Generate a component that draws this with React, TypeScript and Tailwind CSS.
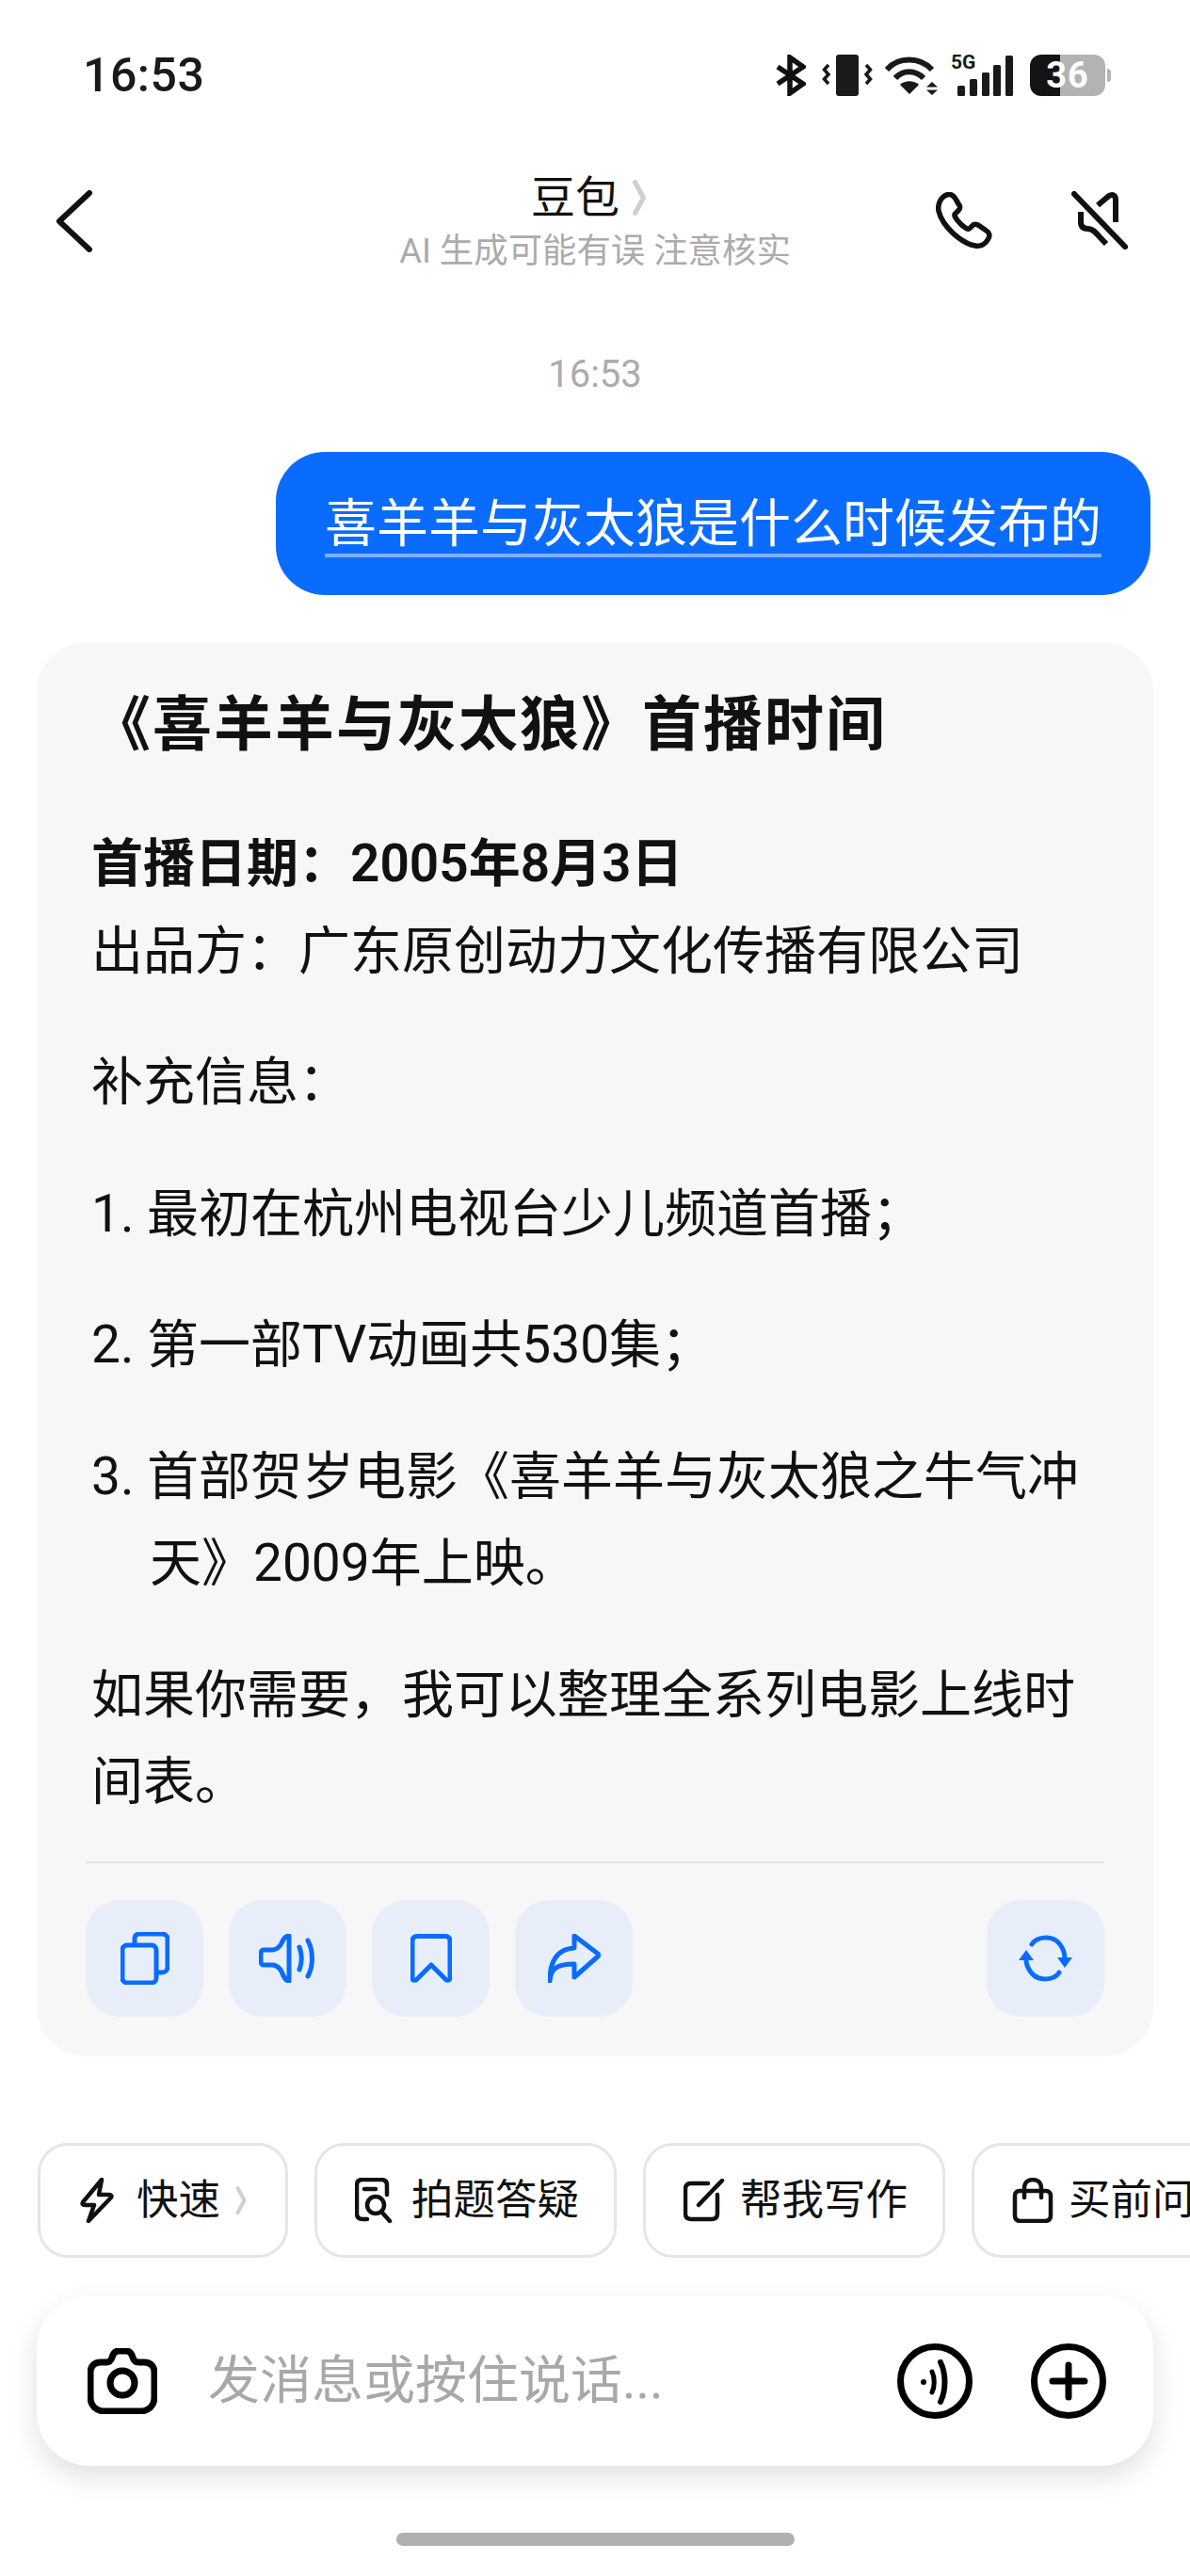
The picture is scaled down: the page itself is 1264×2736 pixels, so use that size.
const fontStack = { fontFamily: '"Roboto", "Noto Sans CJK SC", sans-serif' };

function Bluetooth() {
  return (
    <svg width="32" height="44" viewBox="0 0 32 44" fill="none" stroke="#111" strokeWidth="5.5">
      <path d="M2 13 L29 31 L15 41 V3 L29 13 L2 31" />
    </svg>
  );
}

function Vibrate() {
  return (
    <svg width="54" height="44" viewBox="0 0 54 44" fill="#1a1a1a">
      <rect x="15" y="0" width="24" height="44" rx="3" />
      <path d="M7 11 L2.5 16 L7 21 L2.5 26 L7 31" fill="none" stroke="#1a1a1a" strokeWidth="3.5" />
      <path d="M47 11 L51.5 16 L47 21 L51.5 26 L47 31" fill="none" stroke="#1a1a1a" strokeWidth="3.5" />
    </svg>
  );
}

function Wifi() {
  return (
    <svg width="58" height="42" viewBox="0 0 58 42" fill="none" stroke="#1a1a1a" strokeWidth="6">
      <path d="M2 15 C14 1 37 1 50 15" />
      <path d="M11 24 C19 15 32 15 41 24" />
      <path d="M26 41 L16 31 C21 26 31 26 36 31 Z" fill="#1a1a1a" stroke="none" />
      <path d="M50 28 L56 33.5 H44 Z M50 42 L44 36.5 H56 Z" fill="#1a1a1a" stroke="none" />
    </svg>
  );
}

function Signal() {
  return (
    <div className="relative h-[44px] w-[66px]">
      <span className="absolute left-0 top-[-2px] text-[21px] font-bold leading-[21px] text-[#1a1a1a]">5G</span>
      <svg className="absolute inset-0" width="66" height="44" viewBox="0 0 66 44" fill="#1a1a1a">
        <rect x="7" y="33" width="8" height="11" rx="1.5" />
        <rect x="20" y="26" width="8" height="18" rx="1.5" />
        <rect x="33" y="19" width="8" height="25" rx="1.5" />
        <rect x="45" y="11" width="8" height="33" rx="1.5" />
        <rect x="58" y="1" width="8" height="43" rx="1.5" />
      </svg>
    </div>
  );
}

function Battery() {
  return (
    <div className="flex items-center gap-[2px]">
      <div className="flex h-[44px] w-[80px] items-center justify-center rounded-[12px] bg-[linear-gradient(90deg,#141414_0,#141414_40%,#b3b3b3_40%,#b3b3b3_100%)] text-[38px] font-bold tracking-[1px] text-white">
        36
      </div>
      <div className="h-[14px] w-[4px] rounded-r-full bg-[#b3b3b3]" />
    </div>
  );
}

function Chevron({ className }: { className: string }) {
  return (
    <svg className={className} viewBox="0 0 12 30" fill="none" stroke="#cfcfcf" strokeWidth="4" strokeLinecap="round" strokeLinejoin="round">
      <path d="M2.5 2 L9.5 15 L2.5 28" />
    </svg>
  );
}

function BackIcon() {
  return (
    <svg width="42" height="66" viewBox="0 0 42 66" fill="none" stroke="#111" strokeWidth="6" strokeLinecap="round" strokeLinejoin="round">
      <path d="M37 3 L5 33 L37 63" />
    </svg>
  );
}

function PhoneIcon() {
  return (
    <svg width="60" height="60" viewBox="0 0 60 60" fill="none" stroke="#111" strokeWidth="5.5" strokeLinejoin="round">
      <path d="M13 2.5 C18 2 20 5 22 9 L25.5 15 C26.5 18 24 20 21.5 22 C20 23 19.5 24.5 20.5 26.5 C24 32 28 36 33 39 C35.5 40 36.5 38.5 38 36.5 C40 34 42 33.5 45 35 L53 40.5 C57 43 58 46 55.5 50 C53 55 48 58 42 57 C28 55 7 37 3 20 C1.5 12 6 4 13 2.5 Z" />
    </svg>
  );
}

function MuteIcon() {
  return (
    <svg width="60" height="62" viewBox="0 0 60 62" fill="none" stroke="#111" strokeWidth="6" strokeLinecap="round">
      <path d="M3 3 L57 59" />
      <path d="M28 15 L40 5 C44 2.5 47 5 47 9 V33" strokeLinecap="butt" />
      <path d="M10 22 V33 C10 38 13 40 18 40 C24 40 27 46 37 56" strokeLinecap="butt" />
    </svg>
  );
}

function CopyIcon() {
  return (
    <svg width="52" height="56" viewBox="0 0 52 56" fill="none" stroke="#0a6cff" strokeWidth="5" strokeLinejoin="round">
      <path d="M15 14 V7 C15 4 17 2 20 2 H44 C47 2 50 4 50 7 V37 C50 41 47 43 44 43 H38" />
      <rect x="2" y="14" width="36" height="40" rx="5" />
    </svg>
  );
}

function SpeakerIcon() {
  return (
    <svg width="62" height="52" viewBox="0 0 62 52" fill="none" stroke="#0a6cff" strokeWidth="5" strokeLinecap="round" strokeLinejoin="round">
      <path d="M32 2 V50 C28 50 26 45 24 40 C22 36 20 34 15 33 H5 C3 33 2 31 2 29 V21 C2 19 3 17 5 17 H15 C20 16 22 14 24 10 C26 5 28 2 32 2 Z" />
      <path d="M43 14 C46 22 46 30 43 38" />
      <path d="M52 7 C58 18 58 34 52 45" />
    </svg>
  );
}

function BookmarkIcon() {
  return (
    <svg width="44" height="52" viewBox="0 0 44 52" fill="none" stroke="#0a6cff" strokeWidth="5" strokeLinejoin="round">
      <path d="M7 2.5 H37 C40 2.5 42 4.5 42 7.5 V47 C42 49.5 38 50 37 48 L22 33 L7 48 C5.5 50 2 49.5 2 47 V7.5 C2 4.5 4 2.5 7 2.5 Z" />
    </svg>
  );
}

function ShareIcon() {
  return (
    <svg width="56" height="52" viewBox="0 0 56 52" fill="none" stroke="#0a6cff" strokeWidth="5" strokeLinejoin="round" strokeLinecap="round">
      <path d="M2 50 C3 38 8 32 28 32 V46 L53 24 C54 23 54 22 53 21 L28 2 V15 C10 16 2 28 2 50 Z" />
    </svg>
  );
}

function RefreshIcon() {
  return (
    <svg width="64" height="52" viewBox="0 0 64 52" fill="none" stroke="#0a6cff" strokeWidth="5" strokeLinecap="round">
      <path d="M17 11 C22 3 38 1 46 10 C50 15 52 20 52 26" />
      <path d="M46 41 C41 49 25 51 17 42 C13 37 11 32 11 28" />
      <path d="M44 25 H60 L52 36 Z" fill="#0a6cff" stroke="none" />
      <path d="M3 28 H19 L11 17 Z" fill="#0a6cff" stroke="none" />
    </svg>
  );
}

function BoltIcon() {
  return (
    <svg width="36" height="48" viewBox="0 0 36 48" fill="none" stroke="#111" strokeWidth="4.5" strokeLinejoin="round">
      <path d="M23 2 L3 26 C2 28 3 29 5 29 H15 L9 46 L33 21 C34 19 33 18 31 18 H20 Z" />
    </svg>
  );
}

function ScanIcon() {
  return (
    <svg width="40" height="48" viewBox="0 0 40 48" fill="none" stroke="#111" strokeWidth="4.5" strokeLinecap="round">
      <path d="M13 44 H8 C4 44 2 42 2 38 V8 C2 4 4 2 8 2 H28 C32 2 34 4 34 8 V18" />
      <circle cx="22" cy="29" r="9" />
      <path d="M29 37 L37 46" />
      <path d="M10 12 H22" />
    </svg>
  );
}

function WriteIcon() {
  return (
    <svg width="44" height="46" viewBox="0 0 44 46" fill="none" stroke="#111" strokeWidth="4.5" strokeLinecap="round">
      <path d="M26 5 H8 C4 5 2 7 2 11 V37 C2 41 4 43 8 43 H30 C34 43 36 41 36 37 V17" />
      <path d="M16 28 L41 2" />
    </svg>
  );
}

function BagIcon() {
  return (
    <svg width="44" height="48" viewBox="0 0 44 48" fill="none" stroke="#111" strokeWidth="4.5" strokeLinecap="round">
      <path d="M8 14 H36 C39 14 41 16 41 19 V40 C41 44 39 46 35 46 H9 C5 46 3 44 3 40 V19 C3 16 5 14 8 14 Z" />
      <path d="M13 21 V11 C13 5 17 2 22 2 C27 2 31 5 31 11 V21" />
    </svg>
  );
}

function CameraIcon() {
  return (
    <svg width="74" height="70" viewBox="0 0 74 70" fill="none" stroke="#000" strokeWidth="7" strokeLinejoin="round">
      <path d="M14 15 H20 C23 15 25 13 26 10 C27 6 29 3 33 3 H41 C45 3 47 6 48 10 C49 13 51 15 54 15 H60 C67 15 71 19 71 26 V52 C71 61 65 67 56 67 H18 C9 67 3 61 3 52 V26 C3 19 7 15 14 15 Z" />
      <circle cx="37" cy="37" r="13" />
    </svg>
  );
}

function VoiceIcon() {
  return (
    <svg width="80" height="80" viewBox="0 0 80 80" fill="none" stroke="#000" strokeWidth="7" strokeLinecap="round">
      <circle cx="40" cy="40" r="36.5" />
      <circle cx="28" cy="41" r="3" fill="#000" stroke="none" />
      <path d="M37 30 C40 36 40 46 37 52" strokeWidth="5" />
      <path d="M46 20 C52 32 52 50 46 62" strokeWidth="6" />
    </svg>
  );
}

function PlusIcon() {
  return (
    <svg width="80" height="80" viewBox="0 0 80 80" fill="none" stroke="#000" strokeWidth="7" strokeLinecap="round">
      <circle cx="40" cy="40" r="36.5" />
      <path d="M40 23 V57 M23 40 H57" />
    </svg>
  );
}

function ActionButton({ children }: { children: React.ReactNode }) {
  return (
    <button className="flex h-[124px] w-[125px] items-center justify-center rounded-[36px] bg-[#e8eef9]">
      {children}
    </button>
  );
}

function Chip({ icon, label, chevron, className }: { icon: React.ReactNode; label: string; chevron?: boolean; className: string }) {
  return (
    <div className={`flex h-[122px] shrink-0 items-center rounded-[32px] border-[3px] border-[#e5e5e5] bg-white ${className}`}>
      {icon}
      <span className="whitespace-nowrap text-[44.5px] leading-none text-[#111]">{label}</span>
      {chevron && <Chevron className="ml-[-8px] h-[30px] w-[12px]" />}
    </div>
  );
}

export default function App() {
  return (
    <div style={fontStack} className="flex h-[2736px] w-[1264px] flex-col overflow-hidden bg-white text-[#111]">
      {/* status bar */}
      <div className="flex h-[160px] items-center justify-between pl-[88px] pr-[84px]">
        <span className="text-[50px] font-medium tracking-[0.5px] text-[#1a1a1a]">16:53</span>
        <div className="flex items-center">
          <Bluetooth />
          <div className="ml-[17px]"><Vibrate /></div>
          <div className="ml-[13px]"><Wifi /></div>
          <div className="ml-[12px]"><Signal /></div>
          <div className="ml-[18px]"><Battery /></div>
        </div>
      </div>

      {/* nav */}
      <div className="grid h-[148px] grid-cols-[1fr_auto_1fr] items-center px-[58px]">
        <div className="pt-[2px]">
          <BackIcon />
        </div>
        <div className="flex flex-col items-center pt-[6px]">
          <div className="mr-[12px] flex items-center gap-[12px]">
            <span className="text-[47px] leading-[56px] text-[#111]">豆包</span>
            <Chevron className="h-[38px] w-[18px]" />
          </div>
          <span className="mt-[4px] text-[36.4px] leading-[50px] text-[#ababab]">AI 生成可能有误 注意核实</span>
        </div>
        <div className="flex items-center justify-end gap-[84px] pr-[8px]">
          <PhoneIcon />
          <MuteIcon />
        </div>
      </div>

      {/* timestamp */}
      <div className="mt-[62px] text-center text-[40px] leading-[56px] text-[#ababab]">16:53</div>

      {/* user bubble */}
      <div className="mt-[54px] flex justify-end pr-[42px]">
        <div className="flex h-[152px] w-[929px] items-center justify-center rounded-[52px] bg-[#0a6cff] pt-[4px]">
          <span className="border-b-[4px] border-[#7fb0ff] text-[55px] leading-[64px] text-white">喜羊羊与灰太狼是什么时候发布的</span>
        </div>
      </div>

      {/* answer card */}
      <div className="mx-[39px] mt-[51px] flex h-[1501px] flex-col rounded-[52px] bg-[#f7f7f7] pl-[58px] pr-[52px] pt-[47px]">
        <h1 className="text-[63px] font-bold leading-[80px] tracking-[2px] text-[#111]">《喜羊羊与灰太狼》首播时间</h1>
        <div className="mt-[61px] text-[55px] leading-[92.5px] text-[#111]">
          <p className="font-semibold">首播日期：2005年8月3日</p>
          <p>出品方：广东原创动力文化传播有限公司</p>
          <p className="mt-[47px]">补充信息：</p>
          <ol className="flex flex-col">
            <li className="mt-[47px]">1. 最初在杭州电视台少儿频道首播；</li>
            <li className="mt-[47px]">2. 第一部TV动画共530集；</li>
            <li className="mt-[47px] pl-[62px] indent-[-62px]">3. 首部贺岁电影《喜羊羊与灰太狼之牛气冲天》2009年上映。</li>
          </ol>
          <p className="mt-[47px]">如果你需要，我可以整理全系列电影上线时间表。</p>
        </div>
        <div className="ml-[-6px] mt-[38px] h-[2px] bg-[#e4e4e4]" />
        <div className="ml-[-6px] mt-[39px] flex items-center gap-[27px]">
          <ActionButton><CopyIcon /></ActionButton>
          <ActionButton><SpeakerIcon /></ActionButton>
          <ActionButton><BookmarkIcon /></ActionButton>
          <ActionButton><ShareIcon /></ActionButton>
          <div className="ml-auto">
            <ActionButton><RefreshIcon /></ActionButton>
          </div>
        </div>
      </div>

      {/* quick chips */}
      <div className="mt-[92px] flex gap-[28px] overflow-hidden pl-[40px]">
        <Chip className="w-[266px] gap-[24px] pl-[42px]" icon={<BoltIcon />} label="快速" chevron />
        <Chip className="w-[321px] gap-[20px] pl-[40px]" icon={<ScanIcon />} label="拍题答疑" />
        <Chip className="w-[321px] gap-[16px] pl-[40px]" icon={<WriteIcon />} label="帮我写作" />
        <Chip className="w-[321px] gap-[16px] pl-[40px]" icon={<BagIcon />} label="买前问问" />
      </div>

      {/* input */}
      <div className="mx-[39px] mt-[40px] flex h-[181px] items-center rounded-[56px] bg-white pl-[54px] pr-[50px] shadow-[0_12px_30px_rgba(0,0,0,0.12)]">
        <CameraIcon />
        <span className="ml-[54px] text-[55px] leading-none text-[#a8a8a8]">发消息或按住说话...</span>
        <div className="ml-auto flex items-center gap-[62px]">
          <VoiceIcon />
          <PlusIcon />
        </div>
      </div>

      {/* home indicator */}
      <div className="mx-auto mt-[71px] h-[14px] w-[423px] rounded-full bg-[#b0b0b0]" />
    </div>
  );
}
